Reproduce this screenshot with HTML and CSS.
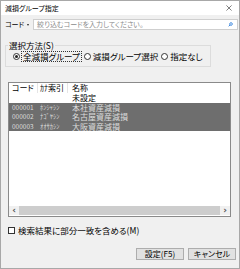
FILE: index.html
```html
<html>
    <head>
        <meta charset="utf-8">
        <link rel="stylesheet" href="styles.css">
    </head>
    <body>
        <div class="window">
            <div class="titlebar">
                <span class="title">減損グループ指定</span>
                <svg class="close" viewBox="0 0 7 7"><path d="M0.5 0.5L6.5 6.5M6.5 0.5L0.5 6.5" stroke="#444" stroke-width="0.8"/></svg>
            </div>
            <div class="search-row">
                <span class="field-label">コード</span>
                <span class="caret"></span>
                <div class="search-box">
                    <span class="placeholder">絞り込むコードを入力してください。</span>
                    <svg class="search-icon" viewBox="0 0 6 6"><circle cx="3.6" cy="2.4" r="1.6" fill="none" stroke="#1a73d9" stroke-width="0.9"/><path d="M2.5 3.5L0.8 5.2" stroke="#1a73d9" stroke-width="1"/></svg>
                </div>
            </div>
            <fieldset class="group">
                <legend>選択方法(S)</legend>
                <div class="radios">
                    <label class="radio checked"><span class="dot"></span><span class="rtext focus">全減損グループ</span></label>
                    <label class="radio"><span class="dot"></span><span class="rtext">減損グループ選択</span></label>
                    <label class="radio"><span class="dot"></span><span class="rtext">指定なし</span></label>
                </div>
            </fieldset>
            <div class="list">
                <div class="list-head">
                    <span class="c-code">コード</span>
                    <span class="c-kana">ｶﾅ索引</span>
                    <span class="c-name">名称</span>
                </div>
                <div class="list-body">
                    <div class="row"><span class="c-code"></span><span class="c-kana"></span><span class="c-name">未設定</span></div>
                    <div class="row sel"><span class="c-code">000001</span><span class="c-kana">ﾎﾝｼｬｼﾝ</span><span class="c-name">本社資産減損</span></div>
                    <div class="row sel"><span class="c-code">000002</span><span class="c-kana">ﾅｺﾞﾔｼﾝ</span><span class="c-name">名古屋資産減損</span></div>
                    <div class="row sel"><span class="c-code">000003</span><span class="c-kana">ｵｵｻｶｼﾝ</span><span class="c-name">大阪資産減損</span></div>
                </div>
                <div class="hscroll">
                    <span class="arrow">&lsaquo;</span>
                    <span class="thumb"></span>
                    <span class="arrow">&rsaquo;</span>
                </div>
            </div>
            <label class="check"><span class="box"></span>検索結果に部分一致を含める(M)</label>
            <div class="buttons">
                <button class="btn">設定(F5)</button>
                <button class="btn">キャンセル</button>
            </div>
        </div>
    </body>
</html>
```
FILE: styles.css
```css
body {
    margin: 0;
    font-family: "Noto Sans CJK JP", "Noto Sans", sans-serif;
    font-feature-settings: "palt";
    color: #000;
}

.window {
    width: 240px;
    height: 269px;
    box-sizing: border-box;
    border: 1px solid #a8a8a8;
    background: #f0f0f0;
    display: flex;
    flex-direction: column;
    overflow: hidden;
}

.titlebar {
    height: 14px;
    background: #fff;
    display: flex;
    align-items: center;
    justify-content: space-between;
    padding: 0 7px 0 4px;
}
.title { font-size: 7px; line-height: 14px; }
.close { width: 6px; height: 6px; }

.search-row {
    margin-top: 4px;
    height: 11px;
    display: flex;
    align-items: center;
    padding: 0 1px 0 4px;
    font-size: 7px;
}
.field-label { white-space: nowrap; line-height: 9px; }
.caret {
    width: 0;
    height: 0;
    border-left: 1.5px solid transparent;
    border-right: 1.5px solid transparent;
    border-top: 2px solid #222;
    margin: 0 4px 0 3px;
}
.search-box {
    flex: 1;
    height: 11px;
    box-sizing: border-box;
    border: 1px solid #cfcfcf;
    background: #fff;
    display: flex;
    align-items: center;
    justify-content: space-between;
    padding: 0 4px 0 3px;
}
.placeholder { color: #8c8c8c; line-height: 9px; white-space: nowrap; }
.search-icon { width: 5px; height: 5px; }

.group {
    margin: 11px 0 0 4px;
    width: 206px;
    box-sizing: border-box;
    border: 1px solid #dcdcdc;
    padding: 0 3px 5px 7px;
    font-size: 8.5px;
}
.group legend {
    padding: 0 1px;
    margin-left: -5px;
    line-height: 8px;
}
.radios {
    display: flex;
    align-items: center;
    height: 9px;
    margin-top: 3px;
}
.radio { display: flex; align-items: center; margin-right: 3px; }
.dot {
    width: 7px;
    height: 7px;
    box-sizing: border-box;
    border: 1px solid #333;
    border-radius: 50%;
    background: #fff;
    display: flex;
    align-items: center;
    justify-content: center;
}
.radio.checked .dot::after {
    content: "";
    width: 3px;
    height: 3px;
    border-radius: 50%;
    background: #222;
}
.rtext { margin-left: 2px; line-height: 9px; }
.rtext.focus { outline: 1px dotted #333; outline-offset: 0; padding: 0 1px; }

.list {
    margin: 15px 0 0 7px;
    width: 223px;
    height: 135px;
    box-sizing: border-box;
    border: 1px solid #8a8a8a;
    background: #fff;
    display: flex;
    flex-direction: column;
    font-size: 8px;
}
.list-head, .row { display: flex; }
.list-head { height: 10px; line-height: 10px; }
.list-head span { border-right: 1px solid #e5e5e5; }
.list-head .c-name { border-right: none; }
.c-code { width: 29px; padding-left: 3px; box-sizing: border-box; flex-shrink: 0; }
.c-kana { width: 30px; padding-left: 2px; box-sizing: border-box; flex-shrink: 0; overflow: hidden; white-space: nowrap; }
.c-name { padding-left: 4px; white-space: nowrap; }
.list-body { flex: 1; }
.row { height: 9.5px; line-height: 9.5px; overflow: hidden; }
.row.sel { background: #6e6e6e; color: #dcdcdc; }
.row.sel .c-code, .row.sel .c-kana { font-size: 6.5px; }

.hscroll {
    height: 9px;
    margin-bottom: 1px;
    display: flex;
    align-items: center;
    background: #f0f0f0;
}
.arrow {
    width: 10px;
    text-align: center;
    font-size: 9px;
    line-height: 9px;
    color: #555;
    font-family: "DejaVu Sans", sans-serif;
    font-weight: bold;
}
.thumb { flex: 1; height: 9px; background: #cdcdcd; }

.check {
    margin: 9px 0 0 7px;
    display: flex;
    align-items: center;
    font-size: 8.5px;
    line-height: 9px;
}
.box {
    width: 7px;
    height: 7px;
    box-sizing: border-box;
    border: 1px solid #333;
    background: #fff;
    margin-right: 3px;
}

.buttons {
    margin-top: 13px;
    display: flex;
    justify-content: flex-end;
    gap: 4px;
    padding-right: 3px;
}
.btn {
    width: 48px;
    height: 12px;
    padding: 0;
    border: 1px solid #adadad;
    background: #e1e1e1;
    font-family: inherit;
    font-feature-settings: "palt";
    font-size: 8px;
    line-height: 10px;
    color: #000;
}
```
